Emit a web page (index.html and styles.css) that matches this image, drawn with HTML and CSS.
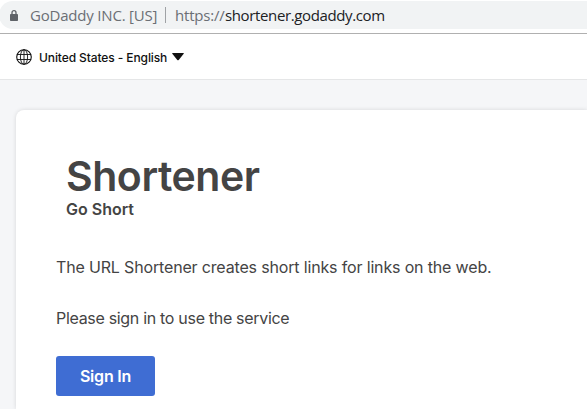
FILE: index.html
```html
<!DOCTYPE html>
<html lang="en">
<head>
<meta charset="utf-8">
<title>Shortener</title>
<link rel="stylesheet" href="styles.css">
</head>
<body>
<div class="browser-bar">
  <div class="address">
    <svg class="lock" width="8" height="11" viewBox="0 0 8 11"><path d="M2 5V2.7a2 2 0 0 1 4 0V5" fill="none" stroke="#5f6368" stroke-width="1.3"/><rect y="4" width="8" height="7" rx=".8" fill="#5f6368"/></svg>
    <span class="issuer">GoDaddy INC. [US]</span>
    <span class="divider"></span>
    <span class="scheme">https://</span><span class="host">shortener.godaddy.com</span>
  </div>
</div>
<header class="locale-bar">
  <svg class="globe" width="16" height="16" viewBox="0 0 16 16" fill="none" stroke="#111"><circle cx="8" cy="8" r="7.3" stroke-width="1.1"/><ellipse cx="8" cy="8" rx="3.6" ry="7.3" stroke-width=".9"/><path d="M8 .7v14.6M.9 5.5h14.2M.9 10.5h14.2" stroke-width=".9"/></svg>
  <span class="locale">United States - English</span>
  <svg class="caret" width="12" height="8" viewBox="0 0 12 8"><path d="M.8 0h10.4q1 0 .5.8L6.7 6.9q-.7.7-1.4 0L.3.8Q-.2 0 .8 0z" fill="#111"/></svg>
</header>
<main class="page">
  <section class="card">
    <h1 class="title">Shortener</h1>
    <p class="tagline">Go Short</p>
    <p class="intro">The URL Shortener creates short links for links on the web.</p>
    <p class="prompt">Please sign in to use the service</p>
    <button class="sign-in" type="button">Sign In</button>
  </section>
</main>
</body>
</html>
```
FILE: styles.css
```css
* { box-sizing: border-box; }
body {
  margin: 0;
  height: 409px;
  overflow: hidden;
  background: #fff;
  color: #444;
  font-family: Inter, "Liberation Sans", sans-serif;
}
p, h1 { margin: 0; white-space: nowrap; }
.browser-bar {
  height: 34px;
  padding-top: 1px;
  border-bottom: 1px solid #b0b0b0;
}
.address {
  display: flex;
  align-items: center;
  height: 28px;
  margin-left: -1px;
  padding-left: 11px;
  border-radius: 14px 0 0 14px;
  background: #f1f3f4;
  font: 15px/26px "Open Sans", "Noto Sans", sans-serif;
  color: #6b6f74;
  white-space: nowrap;
}
.issuer { width: 127px; margin-left: 12px; letter-spacing: -.2px; }
.divider { width: 1px; height: 16px; margin: 0 9px 0 8px; background: #9fa2a5; }
.scheme { width: 50px; letter-spacing: -.2px; }
.host { color: #202124; letter-spacing: -.37px; }
.locale-bar {
  display: flex;
  align-items: center;
  height: 46px;
  padding-left: 16px;
  border-bottom: 1px solid #e5e6e7;
  color: #111;
}
.locale {
  width: 129px;
  margin: 2px 4px 0 7px;
  font-size: 12px;
  font-weight: 500;
  letter-spacing: -.1px;
  white-space: nowrap;
}
.page {
  height: 329px;
  padding: 30px 0 0 16px;
  background: #f5f6f8;
}
.card {
  height: 299px;
  padding: 43px 0 0 40px;
  border-radius: 8px 0 0 0;
  background: #fff;
  box-shadow: 0 0 4px rgba(0, 0, 0, .13);
}
.title {
  margin-left: 10px;
  font-size: 41px;
  line-height: 46px;
  font-weight: 600;
  letter-spacing: -.45px;
}
.tagline {
  margin-left: 10px;
  font-size: 16px;
  line-height: 20px;
  font-weight: 600;
}
.intro, .prompt { font-size: 16px; line-height: 24px; }
.intro { margin-top: 36px; letter-spacing: -.16px; }
.prompt { margin-top: 27px; letter-spacing: -.31px; }
.sign-in {
  display: block;
  width: 99px;
  height: 40px;
  margin-top: 26px;
  padding: 0;
  border: 0;
  border-radius: 3px;
  background: #3f6dd3;
  color: #fff;
  font: 600 16px/40px Inter, "Liberation Sans", sans-serif;
  letter-spacing: -.2px;
}
```
